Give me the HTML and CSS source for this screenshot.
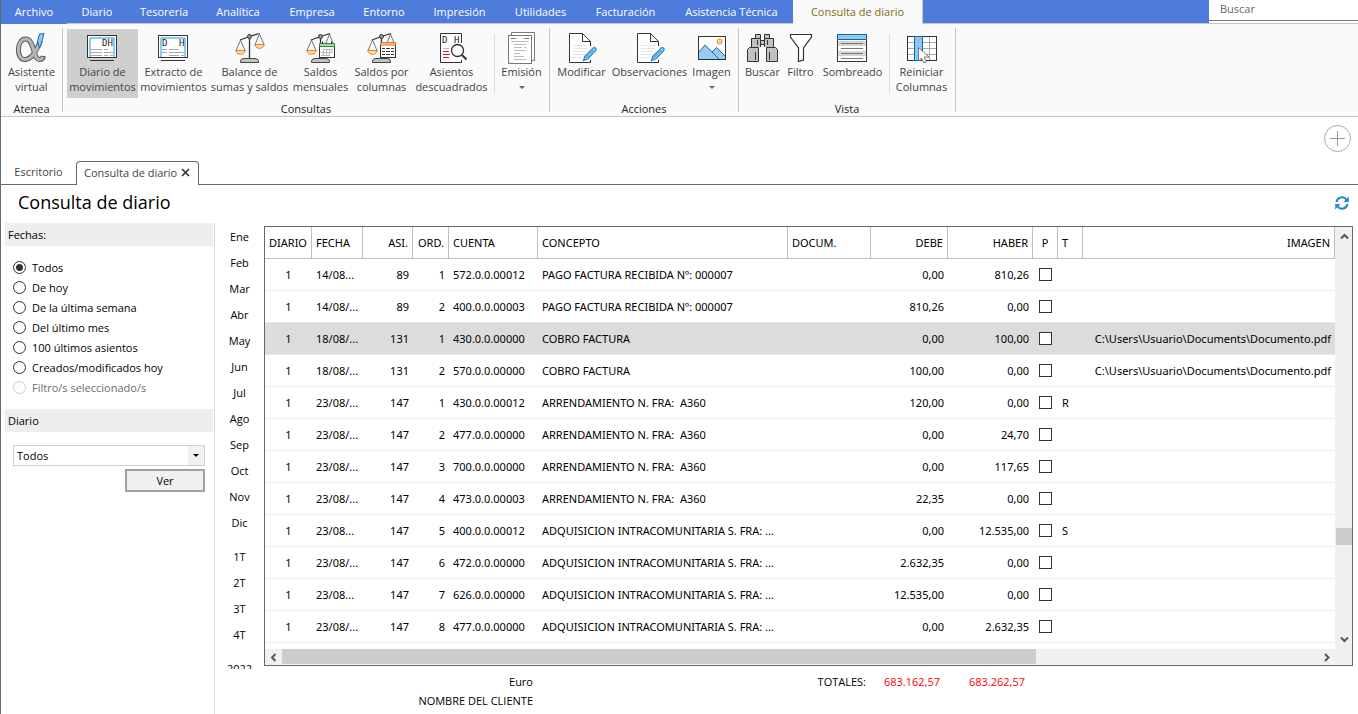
FILE: index.html
```html
<!DOCTYPE html>
<html lang="es">
<head>
<meta charset="utf-8">
<title>Consulta de diario</title>
<link rel="stylesheet" href="styles.css">
</head>
<body>
<svg class="defs" aria-hidden="true">
  <symbol id="scale" viewBox="0 0 33 32">
    <path d="M7.500 8L3 18.500M7.500 8L12 18.500M26.500 2L22 12.500M26.500 2L31 12.500" fill="none" stroke="#777"/>
    <path d="M7 8L16.500 4.500L26.500 1.500M16.500 4V27" fill="none" stroke="#333" stroke-width="1.300"/>
    <circle cx="16.500" cy="4.500" r="2" fill="#999" stroke="#333"/>
    <path d="M2.500 18.500H12.500Q11 22.500 7.500 22.500T2.500 18.500Z" fill="#fbdf9b" stroke="#ee7d31"/>
    <path d="M21.500 12.500H31.500Q30 16.500 26.500 16.500T21.500 12.500Z" fill="#fbdf9b" stroke="#ee7d31"/>
    <path d="M7.500 30.500V29Q8 26.500 11 26.500H22Q25 26.500 25.500 29V30.500Z" fill="#c2c2c2" stroke="#444"/>
  </symbol>
  <symbol id="scale-half" viewBox="0 0 33 32">
    <path d="M7.500 8L3 18.500M7.500 8L12 18.500M25.500 2L22 11M25.500 2L29 11" fill="none" stroke="#777"/>
    <path d="M7 8L16.500 4.500L26 1.500M16.500 4V27" fill="none" stroke="#333" stroke-width="1.300"/>
    <circle cx="16.500" cy="4.500" r="2" fill="#999" stroke="#333"/>
    <path d="M2.500 18.500H12.500Q11 22.500 7.500 22.500T2.500 18.500Z" fill="#fbdf9b" stroke="#ee7d31"/>
    <path d="M7.500 30.500V29Q8 26.500 11 26.500H22Q25 26.500 25.500 29V30.500Z" fill="#c2c2c2" stroke="#444"/>
  </symbol>
  <symbol id="edit-page" viewBox="0 0 33 32">
    <path d="M25.500 14V9.500L17.500 1.500H4.500V30.500H25.500V28" fill="#fff" stroke="#333"/>
    <path d="M17.500 1.500V9.500H25.500" fill="none" stroke="#333"/>
    <path d="M8 13.500H22M8 16.500H22M8 19.500H20M8 22.500H18M8 25.500H16" stroke="#e4e4e4"/>
    <path d="M18.500 28.500L19.800 24.300L28.200 15.900Q29.500 15 30.600 16.200T30.700 18.600L22.500 27Z" fill="#9fd3f2" stroke="#1e86c8" stroke-width="1.200"/>
    <path d="M20.500 26L28.500 18" stroke="#1e86c8"/>
  </symbol>
</svg>

<nav class="menu">
  <a href="#" class="file w66">Archivo</a><a href="#" class="w60">Diario</a><a href="#" class="w74">Tesorería</a><a href="#" class="w74">Analítica</a><a href="#" class="w74">Empresa</a><a href="#" class="w70">Entorno</a><a href="#" class="w81">Impresión</a><a href="#" class="w81">Utilidades</a><a href="#" class="w89">Facturación</a><a href="#" class="w123">Asistencia Técnica</a><a href="#" class="current">Consulta de diario</a>
  <div class="menu-rest"></div>
  <div class="search"><input type="search" placeholder="Buscar" aria-label="Buscar"></div>
</nav>

<header class="ribbon">
  <section class="group">
    <div class="tools">
      <button class="tool w61">
        <svg class="icon" viewBox="0 0 33 32"><path d="M25.500 9C22 16 18 27.500 9.500 27.500C1 27.500 1.500 7 10.500 7C20 7 17.500 27.500 24.500 27.500C26.500 27.500 28 26.500 28.500 24" fill="none" stroke="#555" stroke-width="5"/><path d="M25.500 9.500C22 16 18 27.500 9.500 27.500C1 27.500 1.500 7 10.500 7C20 7 17.500 27.500 24.500 27.500C26.500 27.500 27.500 26.500 28 25" fill="none" stroke="#b5b5b5" stroke-width="3.200"/><path d="M24.500 2L29 1.500L26 12.500L24.500 16L22.500 9Z" fill="#8fcaf0" stroke="#1767a8"/></svg>
        <span>Asistente<br>virtual</span>
      </button>
    </div>
    <h2>Atenea</h2>
  </section>
  <section class="group">
    <div class="tools tools-main">
      <button class="tool w71 pressed">
        <svg class="icon" viewBox="0 0 33 32"><rect x="1.500" y="3.500" width="29" height="22" fill="#fff" stroke="#333"/><path d="M4 25V6H28V25" fill="none" stroke="#1c9bd8"/><text x="16" y="14" class="glyph">DH</text><path d="M5 17.500H16M18 17.500H22M5 20.500H16M18 20.500H27M5 23.500H16M18 23.500H22M24 23.500H27" stroke="#aaa"/><path d="M4 28.500H28" stroke="#333"/></svg>
        <span>Diario de<br>movimientos</span>
      </button>
      <button class="tool w71">
        <svg class="icon" viewBox="0 0 33 32"><rect x="1.500" y="3.500" width="29" height="22" fill="#fff" stroke="#333"/><path d="M4 25V6H28V25" fill="none" stroke="#1c9bd8"/><text x="5" y="14" class="glyph">D</text><text x="22" y="14" class="glyph">H</text><path d="M5 17.500H10M12 17.500H22M5 20.500H10M12 20.500H27M12 23.500H22M24 23.500H27" stroke="#aaa"/><path d="M4 28.500H28" stroke="#333"/></svg>
        <span>Extracto de<br>movimientos</span>
      </button>
      <button class="tool w81">
        <svg class="icon"><use href="#scale"/></svg>
        <span>Balance de<br>sumas y saldos</span>
      </button>
      <button class="tool w61">
        <svg class="icon" viewBox="0 0 33 32"><use href="#scale-half"/><rect x="15.500" y="12.500" width="15" height="13" fill="#fff" stroke="#333"/><path d="M15.500 11.500H30.500V14.500H15.500Z" fill="#a5d8a9" stroke="#3d8b4b"/><path d="M18.500 9.500V12M27.500 9.500V12" stroke="#333"/><path d="M20 17.500H28M17 20.500H28M17 23.500H25M19.500 17V24M22.500 17V24M25.500 17V24M28 17V21" fill="none" stroke="#bbb"/></svg>
        <span>Saldos<br>mensuales</span>
      </button>
      <button class="tool w61">
        <svg class="icon" viewBox="0 0 33 32"><use href="#scale-half"/><rect x="15.500" y="11.500" width="15" height="14" fill="#fff" stroke="#333"/><path d="M15.500 10.500H30.500V13H15.500Z" fill="#fbc58b" stroke="#e8701f"/><path d="M17 16.500H20M21 16.500H25M26 16.500H29M17 19.500H20M21 19.500H25M26 19.500H29M17 22.500H20M21 22.500H25M26 22.500H29" stroke="#333"/></svg>
        <span>Saldos por<br>columnas</span>
      </button>
      <button class="tool w79">
        <svg class="icon" viewBox="0 0 33 32"><path d="M26.500 11V1.500H5.500V30.500H26.500V28" fill="#fff" stroke="#333"/><text x="7" y="11" class="glyph">D</text><text x="19" y="11" class="glyph">H</text><path d="M8 16.500H14" stroke="#bbb"/><path d="M8 19.500H14M8 22.500H15M8 25.500H14" stroke="#e0102c"/><circle cx="22.500" cy="18.500" r="6" fill="#fff" stroke="#333" stroke-width="1.300"/><path d="M27 23L31.500 27.500" stroke="#333" stroke-width="2"/></svg>
        <span>Asientos<br>descuadrados</span>
      </button>
      <i class="divider"></i>
      <button class="tool w53">
        <svg class="icon" viewBox="0 0 33 32"><path d="M6.500 3V.5H29.500V28.500H27" fill="#fff" stroke="#777"/><rect x="3.500" y="3.500" width="23" height="28" fill="#fff" stroke="#777"/><path d="M6 6.500H11M19 6.500H24" stroke="#777"/><path d="M6 9.500H24M9 12.500H21M9 15.500H17M19 15.500H21M9 18.500H21M9 21.500H15M9 24.500H19M9 27.500H21" stroke="#bbb"/></svg>
        <span>Emisión</span><i class="caret"></i>
      </button>
    </div>
    <h2>Consultas</h2>
  </section>
  <section class="group">
    <div class="tools">
      <button class="tool w57"><svg class="icon"><use href="#edit-page"/></svg><span>Modificar</span></button>
      <button class="tool w79"><svg class="icon"><use href="#edit-page"/></svg><span>Observaciones</span></button>
      <button class="tool w45">
        <svg class="icon" viewBox="0 0 33 32"><rect x="3.500" y="4.500" width="27" height="23" fill="#fff" stroke="#333"/><path d="M4 20L10 13L17 20L21.500 15.500L30 24V27H4Z" fill="#9acbf0"/><path d="M4 20L10 13L24 27M17 20L21.500 15.500L30 24" fill="none" stroke="#1767b5"/><circle cx="24.500" cy="9.500" r="2.500" fill="#fbd98c" stroke="#ee7d31"/></svg>
        <span>Imagen</span><i class="caret"></i>
      </button>
    </div>
    <h2>Acciones</h2>
  </section>
  <section class="group">
    <div class="tools tools-main">
      <button class="tool w39">
        <svg class="icon" viewBox="0 0 33 32"><path d="M9.500 6.500V2.500H14.500V6.500M18.500 6.500V2.500H23.500V6.500M5.500 15V6.500H14.500V15M18.500 15V6.500H27.500V15M14.500 8.500H18.500V12.500H14.500ZM3.500 15.500H12.500V29.500H1.500V17.500ZM20.500 15.500H29.500L31.500 17.500V29.500H20.500Z" fill="#c2c2c2" stroke="#333"/><path d="M11.500 8V13M21.500 8V13M9.500 20V28M23.500 20V28" stroke="#333"/></svg>
        <span>Buscar</span>
      </button>
      <button class="tool w37">
        <svg class="icon" viewBox="0 0 33 32"><path d="M6.500 2.500H27.500V5L19.500 16V28L14.500 29.500V16L6.500 5Z" fill="#fff" stroke="#333" stroke-width="1.200"/></svg>
        <span>Filtro</span>
      </button>
      <button class="tool w67">
        <svg class="icon" viewBox="0 0 33 32"><rect x="1.500" y="2.500" width="29" height="27" fill="#fff" stroke="#333"/><path d="M2 9H30V14H2ZM2 19H30V24H2Z" fill="#d6d6d6"/><rect x="1.500" y="2.500" width="29" height="5" fill="#8fc7ee" stroke="#0d65ad"/><path d="M5 11.500H27M5 16.500H27M5 21.500H27M5 26.500H27" stroke="#777"/></svg>
        <span>Sombreado</span>
      </button>
      <i class="divider"></i>
      <button class="tool w63">
        <svg class="icon" viewBox="0 0 33 32"><rect x="2.500" y="4.500" width="29" height="24" fill="#fff" stroke="#333"/><path d="M3 10.500H31M3 16.500H31M3 22.500H31M24.500 5V28" stroke="#aaa"/><rect x="9.500" y="4.500" width="8" height="24" fill="#8fc7ee" stroke="#0d65ad"/><path d="M13.500 15.500V29L16.500 26L19 31L21.500 29.800L19.200 25H24Z" fill="#fff" stroke="#777"/></svg>
        <span>Reiniciar<br>Columnas</span>
      </button>
    </div>
    <h2>Vista</h2>
  </section>
</header>

<div class="addbar">
  <button class="add" aria-label="Añadir"><svg viewBox="0 0 28 28"><circle cx="13.500" cy="13.500" r="13" fill="none" stroke="#aaa"/><path d="M6 13.500H21M13.500 6V21" stroke="#999"/></svg></button>
</div>

<div class="tabs">
  <a href="#" class="tab">Escritorio</a>
  <div class="tab active"><a href="#">Consulta de diario</a><button aria-label="Cerrar"><svg viewBox="0 0 9 9"><path d="M1 1L8 8M8 1L1 8" stroke="#333" stroke-width="1.600"/></svg></button></div>
</div>

<div class="heading">
  <h1>Consulta de diario</h1>
  <button class="refresh" aria-label="Actualizar"><svg viewBox="0 0 14 14"><path d="M1.500 6A5.500 5.500 0 0 1 11.500 3.800M12.500 8A5.500 5.500 0 0 1 2.500 10.200" fill="none" stroke="#2489cc" stroke-width="2"/><path d="M13.800 .5V6H8.500ZM.2 13.500V8H5.500Z" fill="#2489cc"/></svg></button>
</div>

<main>
  <form class="filters">
    <h3>Fechas:</h3>
    <div class="radios">
      <label><input type="radio" name="f" checked>Todos</label>
      <label><input type="radio" name="f">De hoy</label>
      <label><input type="radio" name="f">De la última semana</label>
      <label><input type="radio" name="f">Del último mes</label>
      <label><input type="radio" name="f">100 últimos asientos</label>
      <label><input type="radio" name="f">Creados/modificados hoy</label>
      <label class="off"><input type="radio" name="f" disabled>Filtro/s seleccionado/s</label>
    </div>
    <h3><label for="diario">Diario</label></h3>
    <div class="pick">
      <div class="combo"><select id="diario"><option>Todos</option></select><span class="combo-arrow"></span></div>
      <button type="button" class="view">Ver</button>
    </div>
  </form>

  <div class="periods">
    <button>Ene</button><button>Feb</button><button>Mar</button><button>Abr</button><button>May</button><button>Jun</button><button>Jul</button><button>Ago</button><button>Sep</button><button>Oct</button><button>Nov</button><button>Dic</button>
    <button class="first">1T</button><button>2T</button><button>3T</button><button>4T</button>
    <button class="first">2022</button>
  </div>

  <div class="content">
    <div class="grid">
      <div class="view-port">
        <table>
          <colgroup><col class="c-dia"><col class="c-fec"><col class="c-asi"><col class="c-ord"><col class="c-cta"><col class="c-con"><col class="c-doc"><col class="c-deb"><col class="c-hab"><col class="c-p"><col class="c-p"><col></colgroup>
          <thead><tr><th class="mid">DIARIO</th><th>FECHA</th><th class="num">ASI.</th><th class="num">ORD.</th><th>CUENTA</th><th>CONCEPTO</th><th>DOCUM.</th><th class="num">DEBE</th><th class="num">HABER</th><th class="mid">P</th><th>T</th><th class="num">IMAGEN</th></tr></thead>
          <tbody>
            <tr><td class="mid">1</td><td>14/08...</td><td class="num">89</td><td class="num">1</td><td>572.0.0.00012</td><td>PAGO FACTURA RECIBIDA Nº: 000007</td><td></td><td class="num">0,00</td><td class="num">810,26</td><td class="tick"><input type="checkbox" aria-label="P"></td><td></td><td class="num"></td></tr>
            <tr><td class="mid">1</td><td>14/08/...</td><td class="num">89</td><td class="num">2</td><td>400.0.0.00003</td><td>PAGO FACTURA RECIBIDA Nº: 000007</td><td></td><td class="num">810,26</td><td class="num">0,00</td><td class="tick"><input type="checkbox" aria-label="P"></td><td></td><td class="num"></td></tr>
            <tr class="selected"><td class="mid">1</td><td>18/08/...</td><td class="num">131</td><td class="num">1</td><td>430.0.0.00000</td><td>COBRO FACTURA</td><td></td><td class="num">0,00</td><td class="num">100,00</td><td class="tick"><input type="checkbox" aria-label="P"></td><td></td><td class="num">C:\Users\Usuario\Documents\Documento.pdf</td></tr>
            <tr><td class="mid">1</td><td>18/08/...</td><td class="num">131</td><td class="num">2</td><td>570.0.0.00000</td><td>COBRO FACTURA</td><td></td><td class="num">100,00</td><td class="num">0,00</td><td class="tick"><input type="checkbox" aria-label="P"></td><td></td><td class="num">C:\Users\Usuario\Documents\Documento.pdf</td></tr>
            <tr><td class="mid">1</td><td>23/08/...</td><td class="num">147</td><td class="num">1</td><td>430.0.0.00012</td><td>ARRENDAMIENTO N. FRA:&nbsp; A360</td><td></td><td class="num">120,00</td><td class="num">0,00</td><td class="tick"><input type="checkbox" aria-label="P"></td><td>R</td><td class="num"></td></tr>
            <tr><td class="mid">1</td><td>23/08/...</td><td class="num">147</td><td class="num">2</td><td>477.0.0.00000</td><td>ARRENDAMIENTO N. FRA:&nbsp; A360</td><td></td><td class="num">0,00</td><td class="num">24,70</td><td class="tick"><input type="checkbox" aria-label="P"></td><td></td><td class="num"></td></tr>
            <tr><td class="mid">1</td><td>23/08/...</td><td class="num">147</td><td class="num">3</td><td>700.0.0.00000</td><td>ARRENDAMIENTO N. FRA:&nbsp; A360</td><td></td><td class="num">0,00</td><td class="num">117,65</td><td class="tick"><input type="checkbox" aria-label="P"></td><td></td><td class="num"></td></tr>
            <tr><td class="mid">1</td><td>23/08/...</td><td class="num">147</td><td class="num">4</td><td>473.0.0.00003</td><td>ARRENDAMIENTO N. FRA:&nbsp; A360</td><td></td><td class="num">22,35</td><td class="num">0,00</td><td class="tick"><input type="checkbox" aria-label="P"></td><td></td><td class="num"></td></tr>
            <tr><td class="mid">1</td><td>23/08...</td><td class="num">147</td><td class="num">5</td><td>400.0.0.00012</td><td>ADQUISICION INTRACOMUNITARIA S. FRA: ...</td><td></td><td class="num">0,00</td><td class="num">12.535,00</td><td class="tick"><input type="checkbox" aria-label="P"></td><td>S</td><td class="num"></td></tr>
            <tr><td class="mid">1</td><td>23/08/...</td><td class="num">147</td><td class="num">6</td><td>472.0.0.00000</td><td>ADQUISICION INTRACOMUNITARIA S. FRA: ...</td><td></td><td class="num">2.632,35</td><td class="num">0,00</td><td class="tick"><input type="checkbox" aria-label="P"></td><td></td><td class="num"></td></tr>
            <tr><td class="mid">1</td><td>23/08...</td><td class="num">147</td><td class="num">7</td><td>626.0.0.00000</td><td>ADQUISICION INTRACOMUNITARIA S. FRA: ...</td><td></td><td class="num">12.535,00</td><td class="num">0,00</td><td class="tick"><input type="checkbox" aria-label="P"></td><td></td><td class="num"></td></tr>
            <tr><td class="mid">1</td><td>23/08/...</td><td class="num">147</td><td class="num">8</td><td>477.0.0.00000</td><td>ADQUISICION INTRACOMUNITARIA S. FRA: ...</td><td></td><td class="num">0,00</td><td class="num">2.632,35</td><td class="tick"><input type="checkbox" aria-label="P"></td><td></td><td class="num"></td></tr>
          </tbody>
        </table>
      </div>
      <div class="vbar">
        <svg viewBox="0 0 9 7"><path d="M1 5.500L4.500 2L8 5.500" fill="none" stroke="#555" stroke-width="2"/></svg>
        <div class="vtrack"><i class="vthumb"></i></div>
        <svg viewBox="0 0 9 7"><path d="M1 1.500L4.500 5L8 1.500" fill="none" stroke="#555" stroke-width="2"/></svg>
      </div>
      <div class="hbar">
        <svg viewBox="0 0 9 9"><path d="M6.500 1L3 4.500L6.500 8" fill="none" stroke="#555" stroke-width="2"/></svg>
        <div class="htrack"><i class="hthumb"></i></div>
        <svg viewBox="0 0 9 9"><path d="M3 1L6.500 4.500L3 8" fill="none" stroke="#555" stroke-width="2"/></svg>
      </div>
    </div>
    <footer class="totals">
      <div class="client"><div>Euro</div><div>NOMBRE DEL CLIENTE</div></div>
      <span class="total-label">TOTALES:</span>
      <span class="amount">683.162,57</span>
      <span class="amount">683.262,57</span>
    </footer>
  </div>
</main>
</body>
</html>
```
FILE: styles.css
```css
* { box-sizing: border-box; }
body {
  margin: 0;
  height: 100vh;
  display: flex;
  flex-direction: column;
  border-left: 1px solid #6a6a6a;
  background: #fff;
  color: #000;
  font: 11px/15px "Open Sans", "Noto Sans", sans-serif;
  overflow: hidden;
}
button, input, select { font: inherit; color: inherit; }
button { border: 0; padding: 0; background: none; }
a { color: inherit; text-decoration: none; }
h1, h2, h3 { margin: 0; font-weight: 400; }
h2, h3 { font-size: 11px; }
.defs { display: none; }
.glyph { font: 9px "DejaVu Sans Mono", monospace; fill: #222; }

/* Menu */
.menu { display: flex; flex: none; height: 24px; }
.menu > a {
  line-height: 24px;
  height: 24px;
  text-align: center;
  white-space: nowrap;
  background: #4e7cdd;
  color: #fff;
  border-bottom: 1px solid #c6c6c6;
}
.menu > a.file { border-color: #4e7cdd; }
.menu > a.current {
  width: 130px;
  background: #fafafa;
  color: #866a0c;
  border: 0;
  border-right: 1px solid #c6c6c6;
}
.menu-rest { flex: 1; background: #4e7cdd; border-bottom: 1px solid #c6c6c6; }
.search { width: 149px; border-bottom: 1px solid #c6c6c6; }
.search input {
  display: block;
  width: 100%;
  height: 21px;
  padding: 0 11px 3px;
  border: 0;
  border-bottom: 1px solid #777;
  background: #fff;
  appearance: none;
}
.search input::placeholder { color: #666; opacity: 1; }

/* Ribbon */
.ribbon {
  display: flex;
  flex: none;
  height: 93px;
  background: #fafafa;
  border-bottom: 1px solid #c6c6c6;
}
.group {
  display: flex;
  flex-direction: column;
  margin-top: 4px;
  height: 84px;
  border-right: 1px solid #c6c6c6;
}
.group h2 { line-height: 12px; text-align: center; color: #222; }
.tools { display: flex; flex: none; padding: 1px 1px 0 0; height: 75px; align-items: flex-start; }
.group:first-child .tools { padding-right: 0; }
.tools-main { padding-left: 4px; }
.group:nth-child(3) .tools { padding: 1px 4px 0 3px; }
.group:nth-child(4) .tools { padding-right: 2px; }
.tool {
  display: flex;
  flex-direction: column;
  align-items: center;
  height: 69px;
  padding-top: 3px;
  color: #444;
  text-align: center;
  white-space: nowrap;
}
.tool.pressed { background: #cfcfcf; }
.icon { width: 33px; height: 32px; }
.w37 { width: 37px; } .w39 { width: 39px; } .w45 { width: 45px; }
.w53 { width: 53px; } .w57 { width: 57px; } .w60 { width: 60px; }
.w61 { width: 61px; } .w63 { width: 63px; } .w66 { width: 66px; }
.w67 { width: 67px; } .w70 { width: 70px; } .w71 { width: 71px; }
.w74 { width: 74px; } .w79 { width: 79px; } .w81 { width: 81px; }
.w89 { width: 89px; } .w123 { width: 123px; }
.divider { width: 1px; height: 59px; margin: 5px 0 0 3px; background: #dcdcdc; }
.caret {
  margin-top: 7px;
  border: 3px solid transparent;
  border-top-color: #666;
  border-bottom: 0;
}

/* Tabs */
.addbar { display: flex; flex: none; justify-content: flex-end; height: 44px; padding: 8px 6px 0 0; }
.add, .add svg { display: block; width: 28px; height: 28px; }
.tabs {
  display: flex;
  flex: none;
  height: 24px;
  box-shadow: inset 0 -1px #666;
  color: #444;
}
.tab { width: 75px; text-align: center; line-height: 22px; white-space: nowrap; }
.tab.active {
  display: flex;
  align-items: center;
  gap: 4px;
  width: auto;
  height: 24px;
  padding: 0 8px 2px 7px;
  border: 1px solid #666;
  border-bottom: 0;
  border-radius: 4px 4px 0 0;
  background: #fff;
}
.tab svg { display: block; width: 9px; height: 9px; }
.heading {
  display: flex;
  flex: none;
  justify-content: space-between;
  align-items: center;
  height: 38px;
  padding: 0 9px 3px 17px;
}
h1 { font-size: 18px; line-height: 23px; }
.refresh svg { display: block; width: 14px; height: 14px; }

/* Main */
main { display: flex; flex: 1; min-height: 0; }
.filters { width: 214px; flex: none; padding: 0 1px 0 4px; border-right: 1px solid #ddd; }
h3 { height: 23px; padding-left: 3px; line-height: 23px; background: #eee; }
.radios { display: flex; flex-direction: column; padding: 11px 0 12px 8px; }
.radios label { display: flex; align-items: center; gap: 6px; height: 20px; }
.radios input {
  flex: none;
  width: 13px;
  height: 13px;
  margin: 0;
  appearance: none;
  border: 1px solid #333;
  border-radius: 50%;
  background: #fff;
}
.radios input:checked { background: radial-gradient(circle, #333 0 3px, #fff 4px); }
.radios .off { color: #6d6d6d; }
.radios .off input { border-color: #ccc; }
.pick { display: flex; flex-direction: column; align-items: flex-end; gap: 3px; padding: 13px 8px 0; }
.combo { position: relative; width: 100%; }
.combo select {
  display: block;
  width: 100%;
  height: 21px;
  padding: 0 20px 0 3px;
  border: 1px solid #d0d0d0;
  border-radius: 0;
  appearance: none;
  background: #fff;
}
.combo-arrow {
  position: absolute;
  top: 1px;
  right: 1px;
  width: 16px;
  height: 19px;
  background: #f0f0f0;
  pointer-events: none;
}
.combo-arrow::after {
  content: "";
  position: absolute;
  top: 8px;
  left: 5px;
  border: 3px solid transparent;
  border-top-color: #000;
  border-bottom: 0;
}
.view { width: 80px; height: 23px; border: 2px solid #a0a0a0; background: #f0f0f0; }
.periods {
  display: flex;
  flex: none;
  flex-direction: column;
  width: 49px;
  margin-bottom: 45px;
  overflow: hidden;
}
.periods button { flex: none; height: 26px; }
.periods .first { margin-top: 8px; }

/* Journal grid */
.content { display: flex; flex: 1; flex-direction: column; min-width: 0; padding: 3px 5px 0 0; }
.grid {
  display: grid;
  flex: 1;
  grid-template: minmax(0, 1fr) 16px / minmax(0, 1fr) 16px;
  min-height: 0;
  border: 1px solid #666;
  background: #f0f0f0;
}
.view-port { overflow: hidden; background: #fff; margin-right: 1px; }
table {
  width: 100%;
  table-layout: fixed;
  border-collapse: separate;
  border-spacing: 0;
  font-family: "Noto Sans", "Open Sans", sans-serif;
}
.c-dia { width: 47px; } .c-fec { width: 51px; } .c-asi { width: 50px; }
.c-ord { width: 36px; } .c-cta { width: 89px; } .c-con { width: 250px; }
.c-doc { width: 83px; } .c-deb { width: 77px; } .c-hab { width: 85px; }
.c-p { width: 25px; }
th, td {
  height: 32px;
  padding: 0 4px 1px;
  overflow: hidden;
  text-align: left;
  font-weight: 400;
  white-space: nowrap;
  border-bottom: 1px solid #ececec;
}
th { border-right: 1px solid #c0c0c0; border-bottom-color: #c0c0c0; }
.num { text-align: right; }
.mid { text-align: center; padding: 0 0 1px; }
.tick { padding: 0; }
.selected td { background: #dcdcdc; }
td input {
  display: block;
  width: 13px;
  height: 13px;
  margin: 0 auto;
  appearance: none;
  border: 1px solid #333;
  background: #fff;
}
.vbar { display: flex; flex-direction: column; align-items: center; padding: 6px 0; }
.vbar svg { flex: none; width: 9px; height: 7px; }
.vtrack { flex: 1; width: 100%; }
.vthumb { display: block; height: 17px; margin-top: 288px; background: #cdcdcd; }
.hbar { display: flex; align-items: center; grid-column: 1 / -1; padding: 0 21px 0 4px; }
.hbar svg { flex: none; width: 9px; height: 9px; }
.htrack { flex: 1; height: 100%; padding-left: 4px; }
.hthumb { display: block; width: 72.5%; height: 15px; background: #cdcdcd; }

.totals { display: flex; flex: none; height: 48px; padding-top: 6px; line-height: 19px; }
.client { width: 269px; text-align: right; }
.total-label { width: 333px; text-align: right; }
.amount { width: 74px; text-align: right; color: #f00; }
.amount + .amount { width: 85px; }
```
